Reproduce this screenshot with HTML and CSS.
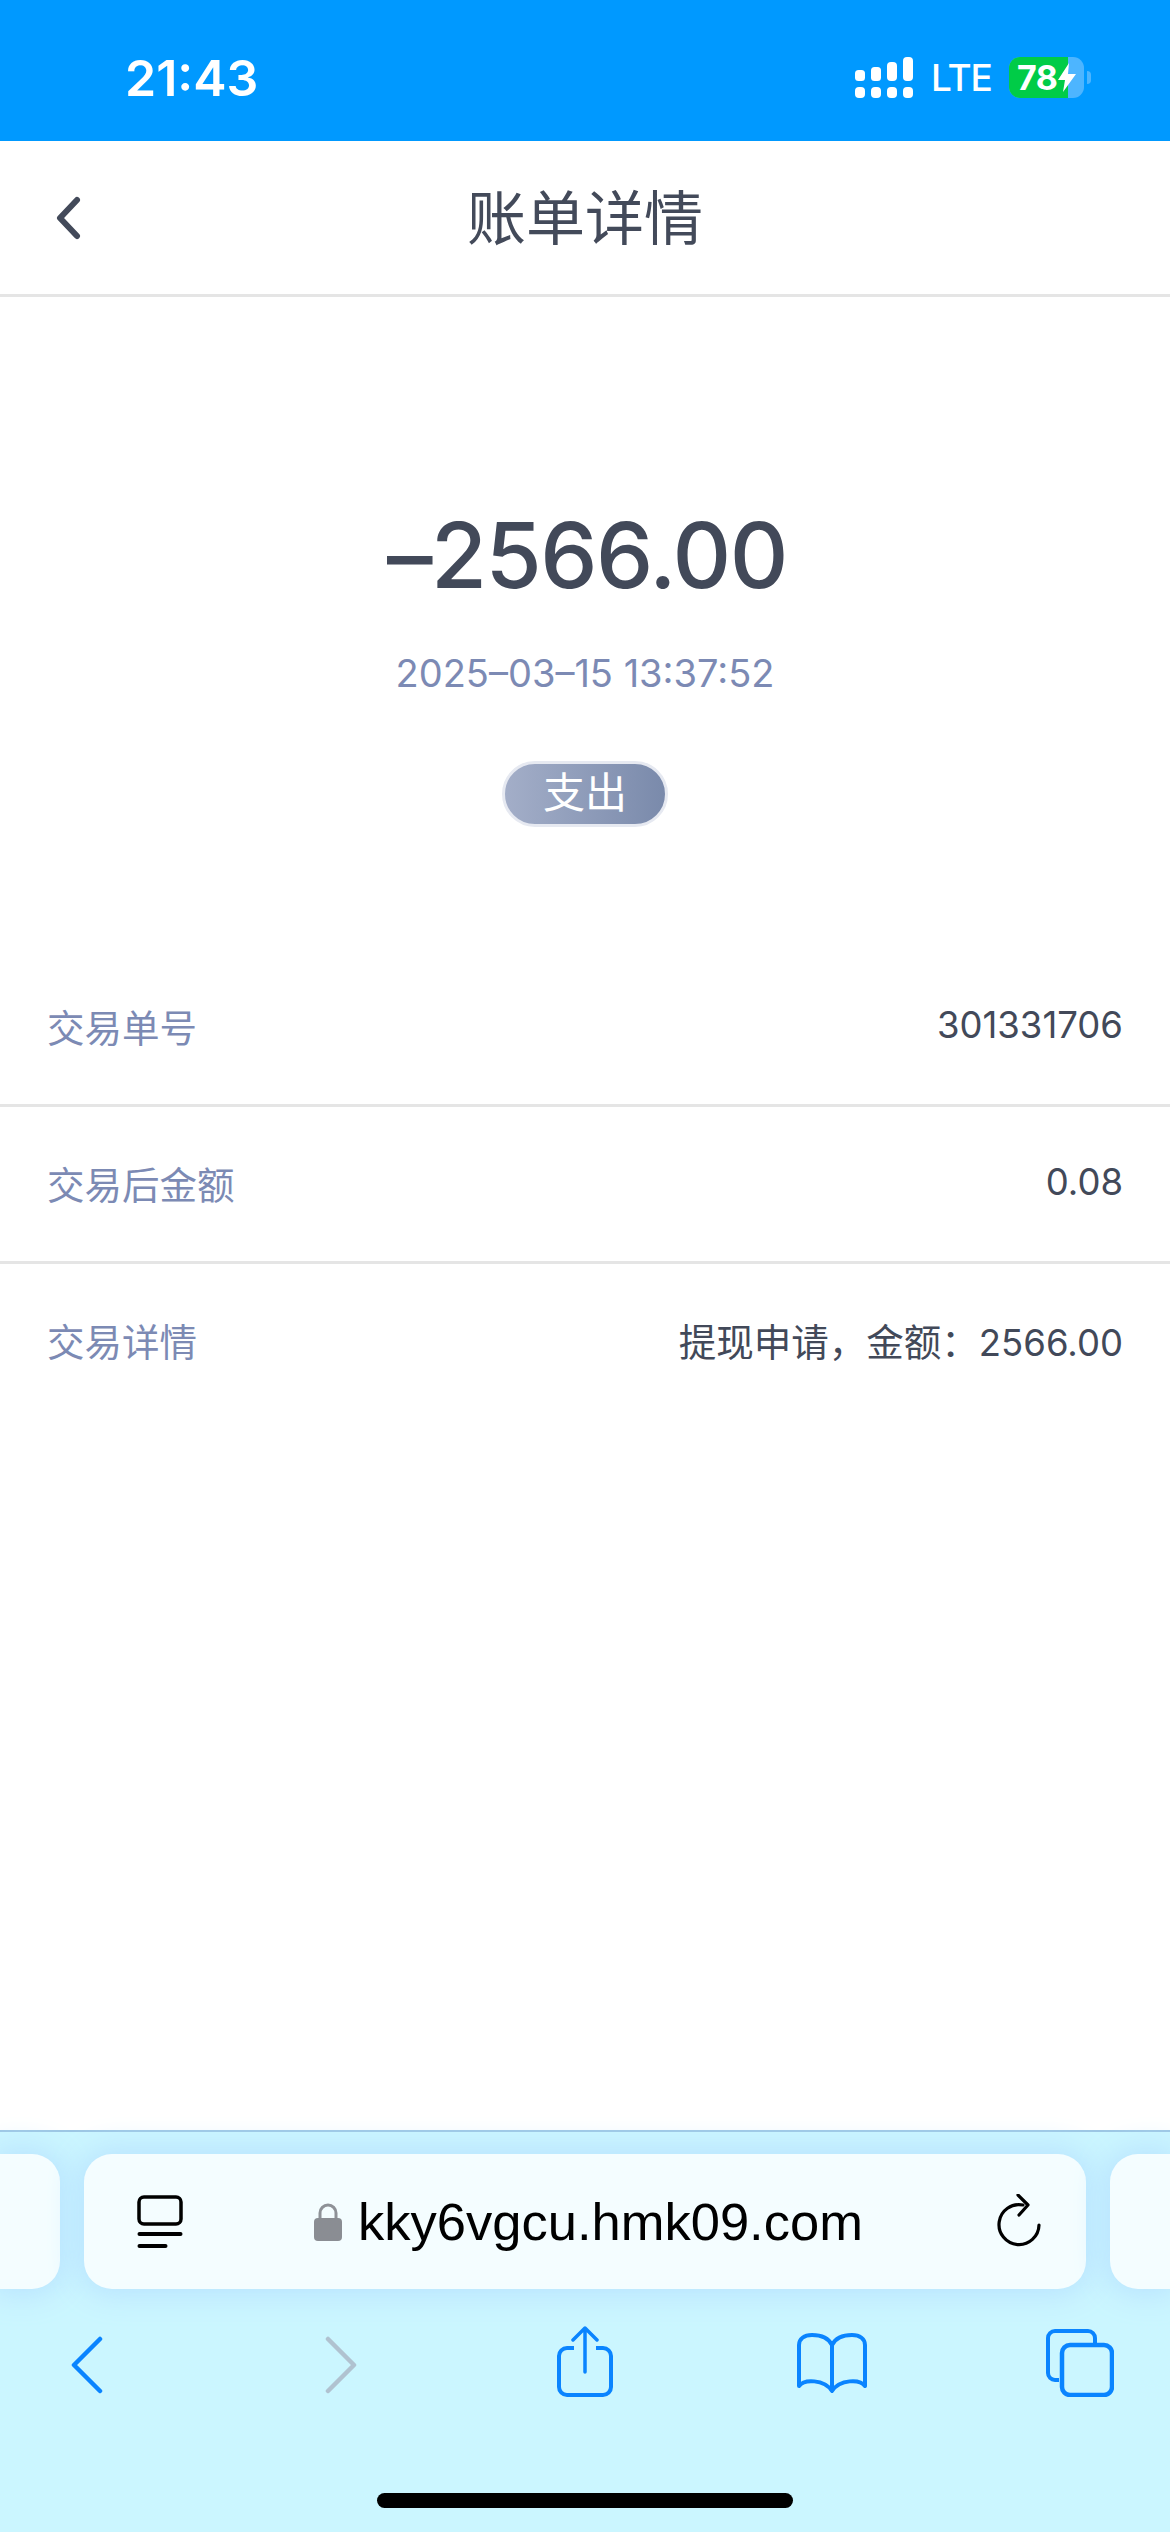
FILE: index.html
```html
<!DOCTYPE html>
<html lang="zh-CN">
<head>
  <meta charset="UTF-8" />
  <title>账单详情</title>
  <link rel="stylesheet" href="styles.css">
</head>
<body>

  <div class="status">
    <span class="time">21:43</span>
    <div class="status-right">
      <svg class="signal" width="58" height="41" viewBox="0 0 58 41">
        <rect x="0" y="13" width="10" height="11" rx="3.5"/>
        <rect x="16" y="10" width="10" height="14" rx="3.5"/>
        <rect x="32" y="5" width="10" height="19" rx="4"/>
        <rect x="48" y="0" width="10" height="24" rx="4"/>
        <rect x="0" y="30" width="10" height="11" rx="4"/>
        <rect x="16" y="30" width="10" height="11" rx="4"/>
        <rect x="32" y="30" width="10" height="11" rx="4"/>
        <rect x="48" y="30" width="10" height="11" rx="4"/>
      </svg>
      <span class="lte">LTE</span>
      <div class="battery">
        <div class="battery-fill"></div>
        <span class="battery-num">78</span>
        <svg class="bolt" width="18" height="29" viewBox="0 0 18 29">
          <path d="M11 0 L0 17 H7 L5 29 L18 11 H10 Z" fill="#fff"/>
        </svg>
      </div>
      <div class="battery-nub"></div>
    </div>
  </div>

  <header class="nav">
    <svg class="nav-back" width="26" height="44" viewBox="0 0 26 44">
      <path d="M22 4 L5 22 L22 40" fill="none" stroke="#434a5a" stroke-width="6" stroke-linecap="round" stroke-linejoin="round"/>
    </svg>
    <h1 class="nav-title">账单详情</h1>
  </header>

  <main class="content">
    <section class="summary">
      <div class="amount">–2566.00</div>
      <div class="date">2025–03–15 13:37:52</div>
      <div class="tag">支出</div>
    </section>

    <ul class="rows">
      <li class="row"><span class="row-label">交易单号</span><span class="row-value">301331706</span></li>
      <li class="row"><span class="row-label">交易后金额</span><span class="row-value">0.08</span></li>
      <li class="row"><span class="row-label">交易详情</span><span class="row-value"><span class="row-cjk">提现申请，金额：</span>2566.00</span></li>
    </ul>
  </main>

  <footer class="browser">
    <div class="url-strip">
      <div class="side-card side-left"></div>
      <div class="url-bar">
        <svg class="tab-icon" width="46" height="54" viewBox="0 0 46 54">
          <rect x="2" y="2" width="42" height="27" rx="5" fill="none" stroke="#000" stroke-width="3.5"/>
          <rect x="0.5" y="37" width="45" height="4" rx="2"/>
          <rect x="0.5" y="49" width="30" height="4" rx="2"/>
        </svg>
        <div class="url-center">
          <svg class="lock" width="28" height="38" viewBox="0 0 28 38">
            <path d="M6 17 V10 a8 8 0 0 1 16 0 V17" fill="none" stroke="#8e9197" stroke-width="3"/>
            <rect x="0" y="15" width="28" height="23" rx="4" fill="#8a8d93"/>
          </svg>
          <span class="url-text">kky6vgcu.hmk09.com</span>
        </div>
        <svg class="reload" width="46" height="56" viewBox="0 0 46 56">
          <path d="M27 11 A20 20 0 1 0 43 31" fill="none" stroke="#000" stroke-width="3.2" stroke-linecap="round"/>
          <path d="M22 1 L32 11 L23 21" fill="none" stroke="#000" stroke-width="3.2" stroke-linecap="round" stroke-linejoin="round"/>
        </svg>
      </div>
      <div class="side-card side-right"></div>
    </div>

    <div class="tools">
      <svg class="tool" width="35" height="58" viewBox="0 0 35 58">
        <path d="M31 3 L5 29 L31 55" fill="none" stroke="#0a84ff" stroke-width="4.5" stroke-linecap="round" stroke-linejoin="round"/>
      </svg>
      <svg class="tool tool-next" width="35" height="58" viewBox="0 0 35 58">
        <path d="M4 3 L30 29 L4 55" fill="none" stroke="#b0c2d0" stroke-width="4.5" stroke-linecap="round" stroke-linejoin="round"/>
      </svg>
      <svg class="tool tool-share" width="58" height="72" viewBox="0 0 58 72">
        <path d="M18 22 H11 a8 8 0 0 0 -8 8 V61 a8 8 0 0 0 8 8 H47 a8 8 0 0 0 8 -8 V30 a8 8 0 0 0 -8 -8 H40" fill="none" stroke="#0a84ff" stroke-width="4"/>
        <path d="M29 46 V2 M17 14 L29 2 L41 14" fill="none" stroke="#0a84ff" stroke-width="3.5" stroke-linecap="round" stroke-linejoin="round"/>
      </svg>
      <svg class="tool tool-book" width="72" height="60" viewBox="0 0 72 60">
        <path d="M36 12 C32 4 24 2 16 2 C8 2 3 6 3 12 V53 C8 46 28 46 36 58 C44 46 64 46 69 53 V12 C69 6 64 2 56 2 C48 2 40 4 36 12 Z M36 12 V58" fill="none" stroke="#0a84ff" stroke-width="4" stroke-linejoin="round"/>
      </svg>
      <svg class="tool tool-tabs" width="68" height="68" viewBox="0 0 68 68">
        <path d="M13 51 H9 a7 7 0 0 1 -7 -7 V9 a7 7 0 0 1 7 -7 H42 a7 7 0 0 1 7 7 V15" fill="none" stroke="#0a84ff" stroke-width="4"/>
        <rect x="16" y="16" width="50" height="50" rx="8" fill="none" stroke="#0a84ff" stroke-width="4.5"/>
      </svg>
    </div>

    <div class="home-wrap"><div class="home-bar"></div></div>
  </footer>

</body>
</html>
```

FILE: styles.css
```css
* {
  box-sizing: border-box;
}
html, body {
  margin: 0;
  padding: 0;
}
body {
  width: 1170px;
  height: 2532px;
  display: flex;
  flex-direction: column;
  overflow: hidden;
  background: #fff;
  font-family: Inter, "Noto Sans CJK SC", sans-serif;
  color: #424959;
}

/* status bar */
.status {
  height: 141px;
  flex: none;
  background: #0099ff;
  color: #fff;
  display: flex;
  justify-content: space-between;
  padding: 57px 79px 0 125px;
}
.time {
  font-size: 50px;
  font-weight: 600;
  line-height: 42px;
}
.status-right {
  display: flex;
  align-items: flex-start;
}
.signal {
  fill: #fff;
}
.lte {
  margin-left: 18px;
  font-size: 37px;
  line-height: 41px;
  font-weight: 500;
  width: 59px;
  letter-spacing: -1px;
}
.battery {
  margin-left: 19px;
  width: 75px;
  height: 41px;
  border-radius: 11px;
  background: #4db5ff;
  overflow: hidden;
  display: flex;
  align-items: center;
  position: relative;
}
.battery-fill {
  position: absolute;
  left: 0;
  top: 0;
  bottom: 0;
  width: 59px;
  background: #00cc47;
}
.battery-num {
  position: relative;
  margin-left: 8px;
  font-size: 34px;
  font-weight: 700;
  line-height: 41px;
  letter-spacing: -0.5px;
}
.bolt {
  position: relative;
  margin-left: 1px;
}
.battery-nub {
  margin: 14px 0 0 3px;
  width: 4px;
  height: 13px;
  border-radius: 0 6px 6px 0;
  background: #4db5ff;
}

/* nav */
.nav {
  height: 156px;
  flex: none;
  border-bottom: 3px solid #e5e5e5;
  display: flex;
  align-items: center;
  justify-content: center;
  padding-bottom: 7px;
  position: relative;
}
.nav-back {
  position: absolute;
  left: 55px;
  top: 55px;
}
.nav-title {
  margin: 0;
  font-size: 59px;
  font-weight: 400;
  color: #434a5a;
}

/* summary */
.content {
  flex: 1;
}
.summary {
  display: flex;
  flex-direction: column;
  align-items: center;
  padding-top: 203px;
}
.amount {
  font-size: 91px;
  font-weight: 500;
  line-height: 110px;
  letter-spacing: -1.5px;
  padding-left: 4px;
  color: #424959;
}
.date {
  margin-top: 40px;
  font-size: 38px;
  line-height: 46px;
  color: #7c8ab4;
}
.tag {
  margin-top: 65px;
  width: 166px;
  height: 66px;
  border-radius: 33px;
  border: 3px solid #e6e9f1;
  background: linear-gradient(90deg, #a3aec8, #7a8aab);
  color: #fff;
  font-size: 42px;
  line-height: 58px;
  text-align: center;
}

/* detail rows */
.rows {
  list-style: none;
  margin: 123px 0 0;
  padding: 0;
}
.row {
  height: 157px;
  padding: 0 47px 4px;
  display: flex;
  justify-content: space-between;
  align-items: center;
  border-bottom: 3px solid #e5e5e5;
  font-size: 37.5px;
}
.row:last-child {
  border-bottom-color: transparent;
}
.row-label {
  color: #7c8ab4;
}
.row-value {
  font-size: 36.5px;
  color: #424959;
}
.row-cjk {
  font-size: 37.5px;
}

/* safari toolbar */
.browser {
  height: 402px;
  flex: none;
  border-top: 2px solid #9cc6e4;
  background: #cbf6ff;
  display: flex;
  flex-direction: column;
}
.url-strip {
  display: flex;
  gap: 24px;
  margin-top: 22px;
  height: 135px;
  flex: none;
}
.side-card {
  background: #f4fdff;
  box-shadow: 0 0 30px 6px #b9e3ff;
}
.side-left {
  width: 60px;
  border-radius: 0 28px 28px 0;
}
.side-right {
  width: 60px;
  border-radius: 28px 0 0 28px;
}
.url-bar {
  width: 1002px;
  background: #f4fdff;
  border-radius: 28px;
  box-shadow: 0 0 30px 6px #b9e3ff;
  display: flex;
  align-items: center;
  justify-content: space-between;
  padding: 0 44px 0 53px;
}
.url-center {
  display: flex;
  align-items: center;
  gap: 16px;
  margin-left: -2px;
}
.url-text {
  font-family: "Liberation Sans", Arial, sans-serif;
  font-size: 52.5px;
  color: #000;
}
.tools {
  position: relative;
  height: 120px;
  flex: none;
}
.tool {
  position: absolute;
  top: 47px;
  left: 69px;
}
.tool-next {
  left: 324px;
}
.tool-share {
  left: 556px;
  top: 37px;
}
.tool-book {
  left: 796px;
  top: 44px;
}
.tool-tabs {
  left: 1046px;
  top: 40px;
}
.home-wrap {
  flex: 1;
  display: flex;
  justify-content: center;
  padding-top: 84px;
}
.home-bar {
  width: 416px;
  height: 15px;
  border-radius: 8px;
  background: #000;
}
```
